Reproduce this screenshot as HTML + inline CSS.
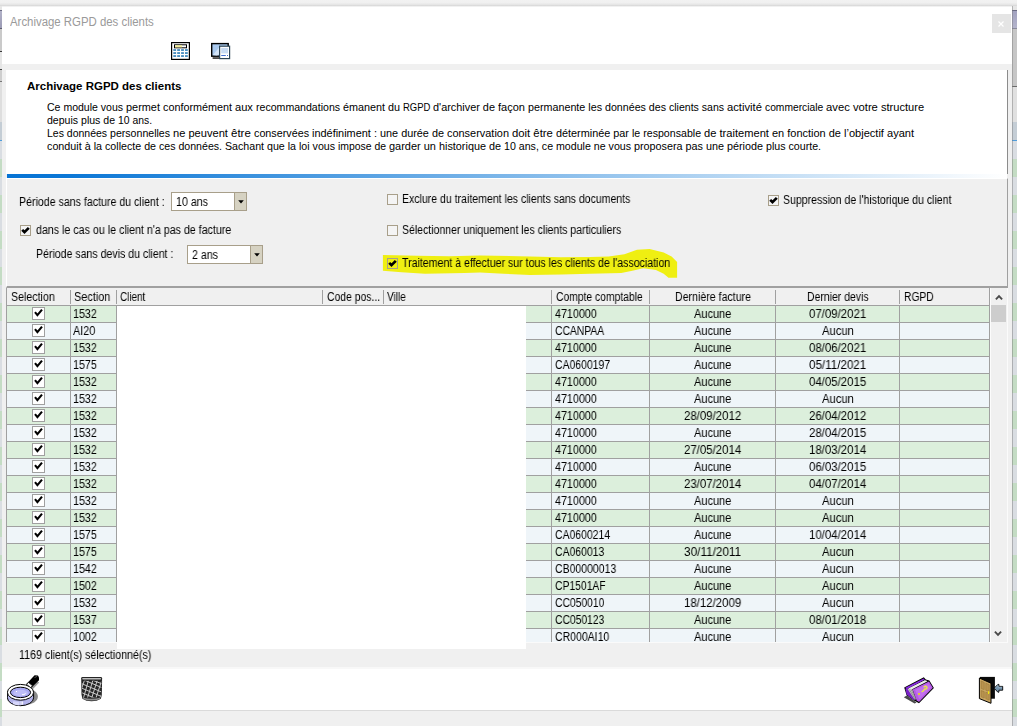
<!DOCTYPE html>
<html><head><meta charset="utf-8"><title>Archivage RGPD des clients</title>
<style>
html,body{margin:0;padding:0}
body{width:1017px;height:726px;position:relative;overflow:hidden;background:#f0f0f0;font-family:'Liberation Sans', sans-serif;}
div,span.t,svg{position:absolute;box-sizing:border-box}
span.t{white-space:pre;display:block;transform-origin:0 0}
span.g{will-change:transform}
</style></head><body>
<div style="left:0;top:0;width:1017px;height:6px;background:linear-gradient(#f2f2f2 0%,#f0f0f0 45%,#e6e6e6 75%,#d6d6d6 100%)"></div>
<div style="left:0px;top:6px;width:2px;height:720px;background:repeating-linear-gradient(#c4dcc4 0,#c4dcc4 18px,#d9dde2 18px,#d9dde2 36px);background-position:0 153px"></div>
<div style="left:0px;top:6px;width:2px;height:153px;background:linear-gradient(#e6e6e6 0,#e6e6e6 4px,#6c6c84 4px,#6c6c84 5px,#b2b2c8 5px,#9a9ab4 22px,#5e5e70 22px,#5e5e70 23px,#cacaca 23px,#cacaca 45px,#3a3a3a 45px,#3a3a3a 46px,#e6e6e6 46px,#e6e6e6 63px,#444 63px,#444 64px,#cecece 64px,#cecece 75px,#777 75px,#777 76px,#dedede 76px,#dedede 116px,#c4cdd5 116px,#c4cdd5 134px,#4f9ddb 134px,#4f9ddb 135px,#d9dde2 135px,#d9dde2 153px,rgba(0,0,0,0) 153px)"></div>
<div style="left:1012px;top:6px;width:5px;height:720px;background:repeating-linear-gradient(#c4dcc4 0,#c4dcc4 18px,#d9dde2 18px,#d9dde2 36px);background-position:0 153px"></div>
<div style="left:1012px;top:6px;width:5px;height:153px;background:linear-gradient(#e6e6e6 0,#e6e6e6 4px,#6c6c84 4px,#6c6c84 5px,#a2a2bf 5px,#b4b4cc 22px,#8a8a9c 22px,#8a8a9c 23px,#c6c6c6 23px,#c6c6c6 80px,#6a6a6a 80px,#6a6a6a 81px,#e0e0e0 81px,#e0e0e0 116px,#c4cdd5 116px,#c4cdd5 134px,#4f9ddb 134px,#4f9ddb 135px,#d9dde2 135px,#d9dde2 153px,rgba(0,0,0,0) 153px)"></div>
<div style="left:2px;top:6px;width:1010px;height:58px;background:#fff;"></div>
<div style="left:2px;top:6px;width:1010px;height:1px;background:#f1f1f1;"></div>
<div style="left:2px;top:64px;width:1010px;height:662px;background:#f0f0f0;"></div>
<div style="left:1012px;top:6px;width:1px;height:720px;background:rgba(120,120,120,0.45);"></div>
<div style="left:992px;top:14px;width:19px;height:19px;background:#e5e5e5;"></div>
<div style="left:6px;top:70px;width:1001px;height:104px;background:#fff;"></div>
<div style="left:1007px;top:70px;width:1px;height:104px;background:#8c8c8c;"></div>
<div style="left:7px;top:174px;width:1000px;height:4px;background:linear-gradient(90deg,#0673d4 0%,#0b77d6 6%,#ffffff 100%)"></div>
<div style="left:6px;top:178px;width:1002px;height:110px;background:#f0f0f0;border-left:1px solid #fff;border-top:1px solid #fff;border-right:1px solid #a0a0a0;border-bottom:2px solid #a0a0a0;"></div>
<div style="left:171px;top:192px;width:76px;height:19px;background:#fff;border:1px solid #a89f8a;"></div>
<div style="left:234px;top:193px;width:12px;height:17px;background:#d6d2c2;border-left:1px solid #a89f8a;"></div>
<div style="left:20px;top:225px;width:11px;height:11px;background:#f4f4f4;border:1px solid #a89f8a;"></div>
<div style="left:187px;top:245px;width:76px;height:19px;background:#fff;border:1px solid #a89f8a;"></div>
<div style="left:250px;top:246px;width:12px;height:17px;background:#d6d2c2;border-left:1px solid #a89f8a;"></div>
<div style="left:387px;top:194px;width:11px;height:11px;background:#f4f4f4;border:1px solid #a89f8a;"></div>
<div style="left:387px;top:225px;width:11px;height:11px;background:#f4f4f4;border:1px solid #a89f8a;"></div>
<svg style="left:370px;top:240px" width="320" height="50" viewBox="370 240 320 50">
<path d="M382.9 255 L417 255.8 L449 256.3 L480 255.4 L530 256.5 L561 257.2 L590 257 L608.7 256.5 L624.4 254.2 L637 249.8 L649.6 249.1 L663.7 252.6 L671.6 256.5 L677.1 262 L677.1 277.8 L668.5 277.8 L663.7 273.8 L655.9 269.9 L643.3 268.3 L632.3 270.7 L621.3 273 L589.8 273.8 L561.5 274.6 L530 274.9 L503.7 273.8 L480 272.6 L464.4 273 L425 273.8 L401.5 272.3 L382.9 270.7 Z" fill="#efef12"/></svg>
<div style="left:387px;top:258px;width:11px;height:11px;background:#efef12;border:1px solid #a89f8a;"></div>
<div style="left:768px;top:195px;width:11px;height:11px;background:#f4f4f4;border:1px solid #a89f8a;"></div>
<div style="left:6px;top:288px;width:1px;height:354px;background:#a0a0a0;"></div>
<div style="left:7px;top:288px;width:983px;height:17px;background:#f0f0f0;"></div>
<div style="left:7px;top:305px;width:983px;height:1px;background:#a0a0a0;"></div>
<div style="left:70px;top:290px;width:1px;height:14px;background:#a0a0a0;"></div>
<div style="left:116px;top:290px;width:1px;height:14px;background:#a0a0a0;"></div>
<div style="left:322px;top:290px;width:1px;height:14px;background:#a0a0a0;"></div>
<div style="left:383px;top:290px;width:1px;height:14px;background:#a0a0a0;"></div>
<div style="left:551px;top:290px;width:1px;height:14px;background:#a0a0a0;"></div>
<div style="left:649px;top:290px;width:1px;height:14px;background:#a0a0a0;"></div>
<div style="left:775px;top:290px;width:1px;height:14px;background:#a0a0a0;"></div>
<div style="left:899px;top:290px;width:1px;height:14px;background:#a0a0a0;"></div>
<div style="left:989px;top:288px;width:1px;height:354px;background:#a0a0a0;"></div>
<div style="left:7px;top:306px;width:982px;height:336px;overflow:hidden">
<div style="left:0;top:0px;width:982px;height:16px;background:#dcefdc"></div>
<div style="left:0;top:16px;width:982px;height:1px;background:#a0a0a0"></div>
<div style="left:25px;top:1px;width:13px;height:13px;background:#fff;border:1px solid #a0a0a0"></div>
<svg style="left:25px;top:1px" width="13" height="13" viewBox="0 0 13 13"><path d="M3 5.2 L5.4 8.2 L10 2.6" stroke="#000" stroke-width="2.1" fill="none"/></svg>
<div style="left:0;top:17px;width:982px;height:16px;background:#eff5f9"></div>
<div style="left:0;top:33px;width:982px;height:1px;background:#a0a0a0"></div>
<div style="left:25px;top:18px;width:13px;height:13px;background:#fff;border:1px solid #a0a0a0"></div>
<svg style="left:25px;top:18px" width="13" height="13" viewBox="0 0 13 13"><path d="M3 5.2 L5.4 8.2 L10 2.6" stroke="#000" stroke-width="2.1" fill="none"/></svg>
<div style="left:0;top:34px;width:982px;height:16px;background:#dcefdc"></div>
<div style="left:0;top:50px;width:982px;height:1px;background:#a0a0a0"></div>
<div style="left:25px;top:35px;width:13px;height:13px;background:#fff;border:1px solid #a0a0a0"></div>
<svg style="left:25px;top:35px" width="13" height="13" viewBox="0 0 13 13"><path d="M3 5.2 L5.4 8.2 L10 2.6" stroke="#000" stroke-width="2.1" fill="none"/></svg>
<div style="left:0;top:51px;width:982px;height:16px;background:#eff5f9"></div>
<div style="left:0;top:67px;width:982px;height:1px;background:#a0a0a0"></div>
<div style="left:25px;top:52px;width:13px;height:13px;background:#fff;border:1px solid #a0a0a0"></div>
<svg style="left:25px;top:52px" width="13" height="13" viewBox="0 0 13 13"><path d="M3 5.2 L5.4 8.2 L10 2.6" stroke="#000" stroke-width="2.1" fill="none"/></svg>
<div style="left:0;top:68px;width:982px;height:16px;background:#dcefdc"></div>
<div style="left:0;top:84px;width:982px;height:1px;background:#a0a0a0"></div>
<div style="left:25px;top:69px;width:13px;height:13px;background:#fff;border:1px solid #a0a0a0"></div>
<svg style="left:25px;top:69px" width="13" height="13" viewBox="0 0 13 13"><path d="M3 5.2 L5.4 8.2 L10 2.6" stroke="#000" stroke-width="2.1" fill="none"/></svg>
<div style="left:0;top:85px;width:982px;height:16px;background:#eff5f9"></div>
<div style="left:0;top:101px;width:982px;height:1px;background:#a0a0a0"></div>
<div style="left:25px;top:86px;width:13px;height:13px;background:#fff;border:1px solid #a0a0a0"></div>
<svg style="left:25px;top:86px" width="13" height="13" viewBox="0 0 13 13"><path d="M3 5.2 L5.4 8.2 L10 2.6" stroke="#000" stroke-width="2.1" fill="none"/></svg>
<div style="left:0;top:102px;width:982px;height:16px;background:#dcefdc"></div>
<div style="left:0;top:118px;width:982px;height:1px;background:#a0a0a0"></div>
<div style="left:25px;top:103px;width:13px;height:13px;background:#fff;border:1px solid #a0a0a0"></div>
<svg style="left:25px;top:103px" width="13" height="13" viewBox="0 0 13 13"><path d="M3 5.2 L5.4 8.2 L10 2.6" stroke="#000" stroke-width="2.1" fill="none"/></svg>
<div style="left:0;top:119px;width:982px;height:16px;background:#eff5f9"></div>
<div style="left:0;top:135px;width:982px;height:1px;background:#a0a0a0"></div>
<div style="left:25px;top:120px;width:13px;height:13px;background:#fff;border:1px solid #a0a0a0"></div>
<svg style="left:25px;top:120px" width="13" height="13" viewBox="0 0 13 13"><path d="M3 5.2 L5.4 8.2 L10 2.6" stroke="#000" stroke-width="2.1" fill="none"/></svg>
<div style="left:0;top:136px;width:982px;height:16px;background:#dcefdc"></div>
<div style="left:0;top:152px;width:982px;height:1px;background:#a0a0a0"></div>
<div style="left:25px;top:137px;width:13px;height:13px;background:#fff;border:1px solid #a0a0a0"></div>
<svg style="left:25px;top:137px" width="13" height="13" viewBox="0 0 13 13"><path d="M3 5.2 L5.4 8.2 L10 2.6" stroke="#000" stroke-width="2.1" fill="none"/></svg>
<div style="left:0;top:153px;width:982px;height:16px;background:#eff5f9"></div>
<div style="left:0;top:169px;width:982px;height:1px;background:#a0a0a0"></div>
<div style="left:25px;top:154px;width:13px;height:13px;background:#fff;border:1px solid #a0a0a0"></div>
<svg style="left:25px;top:154px" width="13" height="13" viewBox="0 0 13 13"><path d="M3 5.2 L5.4 8.2 L10 2.6" stroke="#000" stroke-width="2.1" fill="none"/></svg>
<div style="left:0;top:170px;width:982px;height:16px;background:#dcefdc"></div>
<div style="left:0;top:186px;width:982px;height:1px;background:#a0a0a0"></div>
<div style="left:25px;top:171px;width:13px;height:13px;background:#fff;border:1px solid #a0a0a0"></div>
<svg style="left:25px;top:171px" width="13" height="13" viewBox="0 0 13 13"><path d="M3 5.2 L5.4 8.2 L10 2.6" stroke="#000" stroke-width="2.1" fill="none"/></svg>
<div style="left:0;top:187px;width:982px;height:16px;background:#eff5f9"></div>
<div style="left:0;top:203px;width:982px;height:1px;background:#a0a0a0"></div>
<div style="left:25px;top:188px;width:13px;height:13px;background:#fff;border:1px solid #a0a0a0"></div>
<svg style="left:25px;top:188px" width="13" height="13" viewBox="0 0 13 13"><path d="M3 5.2 L5.4 8.2 L10 2.6" stroke="#000" stroke-width="2.1" fill="none"/></svg>
<div style="left:0;top:204px;width:982px;height:16px;background:#dcefdc"></div>
<div style="left:0;top:220px;width:982px;height:1px;background:#a0a0a0"></div>
<div style="left:25px;top:205px;width:13px;height:13px;background:#fff;border:1px solid #a0a0a0"></div>
<svg style="left:25px;top:205px" width="13" height="13" viewBox="0 0 13 13"><path d="M3 5.2 L5.4 8.2 L10 2.6" stroke="#000" stroke-width="2.1" fill="none"/></svg>
<div style="left:0;top:221px;width:982px;height:16px;background:#eff5f9"></div>
<div style="left:0;top:237px;width:982px;height:1px;background:#a0a0a0"></div>
<div style="left:25px;top:222px;width:13px;height:13px;background:#fff;border:1px solid #a0a0a0"></div>
<svg style="left:25px;top:222px" width="13" height="13" viewBox="0 0 13 13"><path d="M3 5.2 L5.4 8.2 L10 2.6" stroke="#000" stroke-width="2.1" fill="none"/></svg>
<div style="left:0;top:238px;width:982px;height:16px;background:#dcefdc"></div>
<div style="left:0;top:254px;width:982px;height:1px;background:#a0a0a0"></div>
<div style="left:25px;top:239px;width:13px;height:13px;background:#fff;border:1px solid #a0a0a0"></div>
<svg style="left:25px;top:239px" width="13" height="13" viewBox="0 0 13 13"><path d="M3 5.2 L5.4 8.2 L10 2.6" stroke="#000" stroke-width="2.1" fill="none"/></svg>
<div style="left:0;top:255px;width:982px;height:16px;background:#eff5f9"></div>
<div style="left:0;top:271px;width:982px;height:1px;background:#a0a0a0"></div>
<div style="left:25px;top:256px;width:13px;height:13px;background:#fff;border:1px solid #a0a0a0"></div>
<svg style="left:25px;top:256px" width="13" height="13" viewBox="0 0 13 13"><path d="M3 5.2 L5.4 8.2 L10 2.6" stroke="#000" stroke-width="2.1" fill="none"/></svg>
<div style="left:0;top:272px;width:982px;height:16px;background:#dcefdc"></div>
<div style="left:0;top:288px;width:982px;height:1px;background:#a0a0a0"></div>
<div style="left:25px;top:273px;width:13px;height:13px;background:#fff;border:1px solid #a0a0a0"></div>
<svg style="left:25px;top:273px" width="13" height="13" viewBox="0 0 13 13"><path d="M3 5.2 L5.4 8.2 L10 2.6" stroke="#000" stroke-width="2.1" fill="none"/></svg>
<div style="left:0;top:289px;width:982px;height:16px;background:#eff5f9"></div>
<div style="left:0;top:305px;width:982px;height:1px;background:#a0a0a0"></div>
<div style="left:25px;top:290px;width:13px;height:13px;background:#fff;border:1px solid #a0a0a0"></div>
<svg style="left:25px;top:290px" width="13" height="13" viewBox="0 0 13 13"><path d="M3 5.2 L5.4 8.2 L10 2.6" stroke="#000" stroke-width="2.1" fill="none"/></svg>
<div style="left:0;top:306px;width:982px;height:16px;background:#dcefdc"></div>
<div style="left:0;top:322px;width:982px;height:1px;background:#a0a0a0"></div>
<div style="left:25px;top:307px;width:13px;height:13px;background:#fff;border:1px solid #a0a0a0"></div>
<svg style="left:25px;top:307px" width="13" height="13" viewBox="0 0 13 13"><path d="M3 5.2 L5.4 8.2 L10 2.6" stroke="#000" stroke-width="2.1" fill="none"/></svg>
<div style="left:0;top:323px;width:982px;height:16px;background:#eff5f9"></div>
<div style="left:0;top:339px;width:982px;height:1px;background:#a0a0a0"></div>
<div style="left:25px;top:324px;width:13px;height:13px;background:#fff;border:1px solid #a0a0a0"></div>
<svg style="left:25px;top:324px" width="13" height="13" viewBox="0 0 13 13"><path d="M3 5.2 L5.4 8.2 L10 2.6" stroke="#000" stroke-width="2.1" fill="none"/></svg>
<div style="left:63px;top:0;width:1px;height:336px;background:#a0a0a0"></div>
<div style="left:109px;top:0;width:1px;height:336px;background:#a0a0a0"></div>
<div style="left:315px;top:0;width:1px;height:336px;background:#a0a0a0"></div>
<div style="left:376px;top:0;width:1px;height:336px;background:#a0a0a0"></div>
<div style="left:544px;top:0;width:1px;height:336px;background:#a0a0a0"></div>
<div style="left:642px;top:0;width:1px;height:336px;background:#a0a0a0"></div>
<div style="left:768px;top:0;width:1px;height:336px;background:#a0a0a0"></div>
<div style="left:892px;top:0;width:1px;height:336px;background:#a0a0a0"></div>
<div style="left:110px;top:0;width:409px;height:336px;background:#fff"></div>
</div>
<div style="left:6px;top:642px;width:1002px;height:1px;background:#fafafa;"></div>
<div style="left:117px;top:642px;width:409px;height:7px;background:#fff;"></div>
<div style="left:990px;top:288px;width:17px;height:354px;background:#f0f0f0;"></div>
<div style="left:1007px;top:288px;width:1px;height:354px;background:#fbfbfb;"></div>
<div style="left:990px;top:288px;width:1px;height:354px;background:#fcfcfc;"></div>
<div style="left:991px;top:305px;width:15px;height:17px;background:#cdcdcd;"></div>
<div style="left:2px;top:667px;width:1009px;height:2px;background:#f8f8f8;"></div>
<div style="left:2px;top:669px;width:1010px;height:41px;background:#fff;"></div>
<div style="left:2px;top:710px;width:1010px;height:1px;background:#dadada;"></div>
<span class="t" style="left:10.20px;top:13.54px;font-size:12px;line-height:17px;color:#9a9a9a;transform:scaleX(0.9498);">Archivage RGPD des clients</span>
<span class="t" style="left:27.00px;top:78.45px;font-size:11.4px;line-height:16px;color:#000;font-weight:bold;transform:scaleX(1.0075);">Archivage RGPD des clients</span>
<span class="t" style="left:46.80px;top:100.09px;font-size:11px;line-height:15px;color:#000;transform:scaleX(0.9571);">Ce module vous </span>
<span class="t" style="left:125.80px;top:100.09px;font-size:11px;line-height:15px;color:#000;transform:scaleX(0.9922);">permet </span>
<span class="t" style="left:162.80px;top:100.09px;font-size:11px;line-height:15px;color:#000;transform:scaleX(0.9814);">conformément </span>
<span class="t" style="left:234.80px;top:100.09px;font-size:11px;line-height:15px;color:#000;transform:scaleX(1.0100);">aux </span>
<span class="t" style="left:255.80px;top:100.09px;font-size:11px;line-height:15px;color:#000;transform:scaleX(0.9615);">recommandations </span>
<span class="t" style="left:342.80px;top:100.09px;font-size:11px;line-height:15px;color:#000;transform:scaleX(0.9811);">émanent du </span>
<span class="t" style="left:402.80px;top:100.09px;font-size:11px;line-height:15px;color:#000;transform:scaleX(0.8612);">RGPD </span>
<span class="t" style="left:432.80px;top:100.09px;font-size:11px;line-height:15px;color:#000;transform:scaleX(0.9895);">d&#x27;archiver de </span>
<span class="t" style="left:497.80px;top:100.09px;font-size:11px;line-height:15px;color:#000;transform:scaleX(1.0012);">façon </span>
<span class="t" style="left:527.80px;top:100.09px;font-size:11px;line-height:15px;color:#000;transform:scaleX(0.9762);">permanente les </span>
<span class="t" style="left:604.80px;top:100.09px;font-size:11px;line-height:15px;color:#000;transform:scaleX(0.9689);">données des </span>
<span class="t" style="left:668.80px;top:100.09px;font-size:11px;line-height:15px;color:#000;transform:scaleX(0.9583);">clients sans </span>
<span class="t" style="left:726.80px;top:100.09px;font-size:11px;line-height:15px;color:#000;transform:scaleX(1.0190);">activité </span>
<span class="t" style="left:764.80px;top:100.09px;font-size:11px;line-height:15px;color:#000;transform:scaleX(0.9327);">commerciale </span>
<span class="t" style="left:825.80px;top:100.09px;font-size:11px;line-height:15px;color:#000;transform:scaleX(1.0223);">avec votre </span>
<span class="t" style="left:880.80px;top:100.09px;font-size:11px;line-height:15px;color:#000;transform:scaleX(1.0076);">structure</span>
<span class="t" style="left:46.80px;top:113.09px;font-size:11px;line-height:15px;color:#000;transform:scaleX(0.9595);">depuis plus de </span>
<span class="t" style="left:117.80px;top:113.09px;font-size:11px;line-height:15px;color:#000;transform:scaleX(0.9437);">10 ans.</span>
<span class="t" style="left:46.80px;top:126.09px;font-size:11px;line-height:15px;color:#000;transform:scaleX(0.9538);">Les données </span>
<span class="t" style="left:109.80px;top:126.09px;font-size:11px;line-height:15px;color:#000;transform:scaleX(0.9629);">personnelles </span>
<span class="t" style="left:172.80px;top:126.09px;font-size:11px;line-height:15px;color:#000;transform:scaleX(1.0088);">ne peuvent </span>
<span class="t" style="left:230.80px;top:126.09px;font-size:11px;line-height:15px;color:#000;transform:scaleX(1.0449);">être </span>
<span class="t" style="left:253.80px;top:126.09px;font-size:11px;line-height:15px;color:#000;transform:scaleX(0.9780);">conservées </span>
<span class="t" style="left:311.80px;top:126.09px;font-size:11px;line-height:15px;color:#000;transform:scaleX(0.9930);">indéfiniment : </span>
<span class="t" style="left:379.80px;top:126.09px;font-size:11px;line-height:15px;color:#000;transform:scaleX(0.9869);">une durée de </span>
<span class="t" style="left:446.80px;top:126.09px;font-size:11px;line-height:15px;color:#000;transform:scaleX(0.9935);">conservation </span>
<span class="t" style="left:511.80px;top:126.09px;font-size:11px;line-height:15px;color:#000;transform:scaleX(1.0280);">doit être </span>
<span class="t" style="left:555.80px;top:126.09px;font-size:11px;line-height:15px;color:#000;transform:scaleX(0.9865);">déterminée par </span>
<span class="t" style="left:631.80px;top:126.09px;font-size:11px;line-height:15px;color:#000;transform:scaleX(0.9651);">le responsable </span>
<span class="t" style="left:703.80px;top:126.09px;font-size:11px;line-height:15px;color:#000;transform:scaleX(1.0110);">de traitement </span>
<span class="t" style="left:771.80px;top:126.09px;font-size:11px;line-height:15px;color:#000;transform:scaleX(0.9977);">en fonction de </span>
<span class="t" style="left:843.80px;top:126.09px;font-size:11px;line-height:15px;color:#000;transform:scaleX(1.0047);">l’objectif </span>
<span class="t" style="left:886.80px;top:126.09px;font-size:11px;line-height:15px;color:#000;transform:scaleX(1.0055);">ayant</span>
<span class="t" style="left:46.80px;top:139.09px;font-size:11px;line-height:15px;color:#000;transform:scaleX(0.9778);">conduit à la </span>
<span class="t" style="left:104.80px;top:139.09px;font-size:11px;line-height:15px;color:#000;transform:scaleX(0.9704);">collecte de </span>
<span class="t" style="left:158.80px;top:139.09px;font-size:11px;line-height:15px;color:#000;transform:scaleX(0.9636);">ces données. </span>
<span class="t" style="left:224.80px;top:139.09px;font-size:11px;line-height:15px;color:#000;transform:scaleX(0.9680);">Sachant que la </span>
<span class="t" style="left:298.80px;top:139.09px;font-size:11px;line-height:15px;color:#000;transform:scaleX(0.9665);">loi vous </span>
<span class="t" style="left:337.80px;top:139.09px;font-size:11px;line-height:15px;color:#000;transform:scaleX(0.9478);">impose de </span>
<span class="t" style="left:388.80px;top:139.09px;font-size:11px;line-height:15px;color:#000;transform:scaleX(0.9971);">garder un </span>
<span class="t" style="left:438.80px;top:139.09px;font-size:11px;line-height:15px;color:#000;transform:scaleX(0.9842);">historique de </span>
<span class="t" style="left:503.80px;top:139.09px;font-size:11px;line-height:15px;color:#000;transform:scaleX(0.9663);">10 ans, ce </span>
<span class="t" style="left:555.80px;top:139.09px;font-size:11px;line-height:15px;color:#000;transform:scaleX(0.9663);">module ne vous </span>
<span class="t" style="left:633.80px;top:139.09px;font-size:11px;line-height:15px;color:#000;transform:scaleX(0.9812);">proposera pas </span>
<span class="t" style="left:705.80px;top:139.09px;font-size:11px;line-height:15px;color:#000;transform:scaleX(0.9810);">une période </span>
<span class="t" style="left:765.80px;top:139.09px;font-size:11px;line-height:15px;color:#000;transform:scaleX(0.9682);">plus courte.</span>
<span class="t g" style="left:19.40px;top:193.54px;font-size:12px;line-height:17px;color:#000;transform:scaleX(0.8843);">Période sans facture du client :</span>
<span class="t g" style="left:175.80px;top:194.04px;font-size:12px;line-height:17px;color:#000;transform:scaleX(0.8882);">10 ans</span>
<span class="t g" style="left:35.80px;top:221.64px;font-size:12px;line-height:17px;color:#000;transform:scaleX(0.8887);">dans le cas ou le client n&#x27;a pas de facture</span>
<span class="t g" style="left:35.80px;top:246.34px;font-size:12px;line-height:17px;color:#000;transform:scaleX(0.8802);">Période sans devis du client :</span>
<span class="t g" style="left:191.80px;top:247.04px;font-size:12px;line-height:17px;color:#000;transform:scaleX(0.8857);">2 ans</span>
<span class="t g" style="left:401.60px;top:190.94px;font-size:12px;line-height:17px;color:#000;transform:scaleX(0.8781);">Exclure du traitement les clients sans documents</span>
<span class="t g" style="left:401.60px;top:222.14px;font-size:12px;line-height:17px;color:#000;transform:scaleX(0.8763);">Sélectionner uniquement les clients particuliers</span>
<span class="t g" style="left:401.90px;top:254.54px;font-size:12px;line-height:17px;color:#000;transform:scaleX(0.8829);">Traitement à effectuer sur tous les clients de l&#x27;association</span>
<span class="t g" style="left:782.80px;top:191.54px;font-size:12px;line-height:17px;color:#000;transform:scaleX(0.8783);">Suppression de l&#x27;historique du client</span>
<span class="t g" style="left:10.80px;top:289.34px;font-size:12px;line-height:17px;color:#000;transform:scaleX(0.8872);">Selection</span>
<span class="t g" style="left:74.30px;top:289.34px;font-size:12px;line-height:17px;color:#000;transform:scaleX(0.9072);">Section</span>
<span class="t g" style="left:120.40px;top:289.34px;font-size:12px;line-height:17px;color:#000;transform:scaleX(0.8231);">Client</span>
<span class="t g" style="left:326.90px;top:289.34px;font-size:12px;line-height:17px;color:#000;transform:scaleX(0.8667);">Code pos...</span>
<span class="t g" style="left:387.00px;top:289.34px;font-size:12px;line-height:17px;color:#000;transform:scaleX(0.8383);">Ville</span>
<span class="t g" style="left:555.70px;top:289.34px;font-size:12px;line-height:17px;color:#000;transform:scaleX(0.8610);">Compte comptable</span>
<span class="t g" style="left:675.10px;top:289.34px;font-size:12px;line-height:17px;color:#000;transform:scaleX(0.8846);">Dernière facture</span>
<span class="t g" style="left:807.40px;top:289.34px;font-size:12px;line-height:17px;color:#000;transform:scaleX(0.8714);">Dernier devis</span>
<span class="t g" style="left:903.50px;top:289.34px;font-size:12px;line-height:17px;color:#000;transform:scaleX(0.8570);">RGPD</span>
<span class="t g" style="left:73.00px;top:306.34px;font-size:12px;line-height:17px;color:#000;transform:scaleX(0.8919);">1532</span>
<span class="t g" style="left:554.60px;top:306.34px;font-size:12px;line-height:17px;color:#000;transform:scaleX(0.8949);">4710000</span>
<span class="t g" style="left:694.00px;top:306.34px;font-size:12px;line-height:17px;color:#000;transform:scaleX(0.9165);">Aucune</span>
<span class="t g" style="left:809.25px;top:306.34px;font-size:12px;line-height:17px;color:#000;transform:scaleX(0.9522);">07/09/2021</span>
<span class="t g" style="left:73.00px;top:323.34px;font-size:12px;line-height:17px;color:#000;transform:scaleX(0.9036);">AI20</span>
<span class="t g" style="left:554.60px;top:323.34px;font-size:12px;line-height:17px;color:#000;transform:scaleX(0.8631);">CCANPAA</span>
<span class="t g" style="left:694.00px;top:323.34px;font-size:12px;line-height:17px;color:#000;transform:scaleX(0.9165);">Aucune</span>
<span class="t g" style="left:822.40px;top:323.34px;font-size:12px;line-height:17px;color:#000;transform:scaleX(0.9355);">Aucun</span>
<span class="t g" style="left:73.00px;top:340.34px;font-size:12px;line-height:17px;color:#000;transform:scaleX(0.8919);">1532</span>
<span class="t g" style="left:554.60px;top:340.34px;font-size:12px;line-height:17px;color:#000;transform:scaleX(0.8949);">4710000</span>
<span class="t g" style="left:694.00px;top:340.34px;font-size:12px;line-height:17px;color:#000;transform:scaleX(0.9165);">Aucune</span>
<span class="t g" style="left:809.25px;top:340.34px;font-size:12px;line-height:17px;color:#000;transform:scaleX(0.9522);">08/06/2021</span>
<span class="t g" style="left:73.00px;top:357.34px;font-size:12px;line-height:17px;color:#000;transform:scaleX(0.8919);">1575</span>
<span class="t g" style="left:554.60px;top:357.34px;font-size:12px;line-height:17px;color:#000;transform:scaleX(0.8695);">CA0600197</span>
<span class="t g" style="left:694.00px;top:357.34px;font-size:12px;line-height:17px;color:#000;transform:scaleX(0.9165);">Aucune</span>
<span class="t g" style="left:809.25px;top:357.34px;font-size:12px;line-height:17px;color:#000;transform:scaleX(0.9665);">05/11/2021</span>
<span class="t g" style="left:73.00px;top:374.34px;font-size:12px;line-height:17px;color:#000;transform:scaleX(0.8919);">1532</span>
<span class="t g" style="left:554.60px;top:374.34px;font-size:12px;line-height:17px;color:#000;transform:scaleX(0.8949);">4710000</span>
<span class="t g" style="left:694.00px;top:374.34px;font-size:12px;line-height:17px;color:#000;transform:scaleX(0.9165);">Aucune</span>
<span class="t g" style="left:809.25px;top:374.34px;font-size:12px;line-height:17px;color:#000;transform:scaleX(0.9522);">04/05/2015</span>
<span class="t g" style="left:73.00px;top:391.34px;font-size:12px;line-height:17px;color:#000;transform:scaleX(0.8919);">1532</span>
<span class="t g" style="left:554.60px;top:391.34px;font-size:12px;line-height:17px;color:#000;transform:scaleX(0.8949);">4710000</span>
<span class="t g" style="left:694.00px;top:391.34px;font-size:12px;line-height:17px;color:#000;transform:scaleX(0.9165);">Aucune</span>
<span class="t g" style="left:822.40px;top:391.34px;font-size:12px;line-height:17px;color:#000;transform:scaleX(0.9355);">Aucun</span>
<span class="t g" style="left:73.00px;top:408.34px;font-size:12px;line-height:17px;color:#000;transform:scaleX(0.8919);">1532</span>
<span class="t g" style="left:554.60px;top:408.34px;font-size:12px;line-height:17px;color:#000;transform:scaleX(0.8949);">4710000</span>
<span class="t g" style="left:684.05px;top:408.34px;font-size:12px;line-height:17px;color:#000;transform:scaleX(0.9522);">28/09/2012</span>
<span class="t g" style="left:809.25px;top:408.34px;font-size:12px;line-height:17px;color:#000;transform:scaleX(0.9522);">26/04/2012</span>
<span class="t g" style="left:73.00px;top:425.34px;font-size:12px;line-height:17px;color:#000;transform:scaleX(0.8919);">1532</span>
<span class="t g" style="left:554.60px;top:425.34px;font-size:12px;line-height:17px;color:#000;transform:scaleX(0.8949);">4710000</span>
<span class="t g" style="left:694.00px;top:425.34px;font-size:12px;line-height:17px;color:#000;transform:scaleX(0.9165);">Aucune</span>
<span class="t g" style="left:809.25px;top:425.34px;font-size:12px;line-height:17px;color:#000;transform:scaleX(0.9522);">28/04/2015</span>
<span class="t g" style="left:73.00px;top:442.34px;font-size:12px;line-height:17px;color:#000;transform:scaleX(0.8919);">1532</span>
<span class="t g" style="left:554.60px;top:442.34px;font-size:12px;line-height:17px;color:#000;transform:scaleX(0.8949);">4710000</span>
<span class="t g" style="left:684.05px;top:442.34px;font-size:12px;line-height:17px;color:#000;transform:scaleX(0.9522);">27/05/2014</span>
<span class="t g" style="left:809.25px;top:442.34px;font-size:12px;line-height:17px;color:#000;transform:scaleX(0.9522);">18/03/2014</span>
<span class="t g" style="left:73.00px;top:459.34px;font-size:12px;line-height:17px;color:#000;transform:scaleX(0.8919);">1532</span>
<span class="t g" style="left:554.60px;top:459.34px;font-size:12px;line-height:17px;color:#000;transform:scaleX(0.8949);">4710000</span>
<span class="t g" style="left:694.00px;top:459.34px;font-size:12px;line-height:17px;color:#000;transform:scaleX(0.9165);">Aucune</span>
<span class="t g" style="left:809.25px;top:459.34px;font-size:12px;line-height:17px;color:#000;transform:scaleX(0.9522);">06/03/2015</span>
<span class="t g" style="left:73.00px;top:476.34px;font-size:12px;line-height:17px;color:#000;transform:scaleX(0.8919);">1532</span>
<span class="t g" style="left:554.60px;top:476.34px;font-size:12px;line-height:17px;color:#000;transform:scaleX(0.8949);">4710000</span>
<span class="t g" style="left:684.05px;top:476.34px;font-size:12px;line-height:17px;color:#000;transform:scaleX(0.9522);">23/07/2014</span>
<span class="t g" style="left:809.25px;top:476.34px;font-size:12px;line-height:17px;color:#000;transform:scaleX(0.9522);">04/07/2014</span>
<span class="t g" style="left:73.00px;top:493.34px;font-size:12px;line-height:17px;color:#000;transform:scaleX(0.8919);">1532</span>
<span class="t g" style="left:554.60px;top:493.34px;font-size:12px;line-height:17px;color:#000;transform:scaleX(0.8949);">4710000</span>
<span class="t g" style="left:694.00px;top:493.34px;font-size:12px;line-height:17px;color:#000;transform:scaleX(0.9165);">Aucune</span>
<span class="t g" style="left:822.40px;top:493.34px;font-size:12px;line-height:17px;color:#000;transform:scaleX(0.9355);">Aucun</span>
<span class="t g" style="left:73.00px;top:510.34px;font-size:12px;line-height:17px;color:#000;transform:scaleX(0.8919);">1532</span>
<span class="t g" style="left:554.60px;top:510.34px;font-size:12px;line-height:17px;color:#000;transform:scaleX(0.8949);">4710000</span>
<span class="t g" style="left:694.00px;top:510.34px;font-size:12px;line-height:17px;color:#000;transform:scaleX(0.9165);">Aucune</span>
<span class="t g" style="left:822.40px;top:510.34px;font-size:12px;line-height:17px;color:#000;transform:scaleX(0.9355);">Aucun</span>
<span class="t g" style="left:73.00px;top:527.34px;font-size:12px;line-height:17px;color:#000;transform:scaleX(0.8919);">1575</span>
<span class="t g" style="left:554.60px;top:527.34px;font-size:12px;line-height:17px;color:#000;transform:scaleX(0.8695);">CA0600214</span>
<span class="t g" style="left:694.00px;top:527.34px;font-size:12px;line-height:17px;color:#000;transform:scaleX(0.9165);">Aucune</span>
<span class="t g" style="left:809.25px;top:527.34px;font-size:12px;line-height:17px;color:#000;transform:scaleX(0.9522);">10/04/2014</span>
<span class="t g" style="left:73.00px;top:544.34px;font-size:12px;line-height:17px;color:#000;transform:scaleX(0.8919);">1575</span>
<span class="t g" style="left:554.60px;top:544.34px;font-size:12px;line-height:17px;color:#000;transform:scaleX(0.8696);">CA060013</span>
<span class="t g" style="left:684.05px;top:544.34px;font-size:12px;line-height:17px;color:#000;transform:scaleX(0.9812);">30/11/2011</span>
<span class="t g" style="left:822.40px;top:544.34px;font-size:12px;line-height:17px;color:#000;transform:scaleX(0.9355);">Aucun</span>
<span class="t g" style="left:73.00px;top:561.34px;font-size:12px;line-height:17px;color:#000;transform:scaleX(0.8919);">1542</span>
<span class="t g" style="left:554.60px;top:561.34px;font-size:12px;line-height:17px;color:#000;transform:scaleX(0.8737);">CB00000013</span>
<span class="t g" style="left:694.00px;top:561.34px;font-size:12px;line-height:17px;color:#000;transform:scaleX(0.9165);">Aucune</span>
<span class="t g" style="left:822.40px;top:561.34px;font-size:12px;line-height:17px;color:#000;transform:scaleX(0.9355);">Aucun</span>
<span class="t g" style="left:73.00px;top:578.34px;font-size:12px;line-height:17px;color:#000;transform:scaleX(0.8919);">1502</span>
<span class="t g" style="left:554.60px;top:578.34px;font-size:12px;line-height:17px;color:#000;transform:scaleX(0.8635);">CP1501AF</span>
<span class="t g" style="left:694.00px;top:578.34px;font-size:12px;line-height:17px;color:#000;transform:scaleX(0.9165);">Aucune</span>
<span class="t g" style="left:822.40px;top:578.34px;font-size:12px;line-height:17px;color:#000;transform:scaleX(0.9355);">Aucun</span>
<span class="t g" style="left:73.00px;top:595.34px;font-size:12px;line-height:17px;color:#000;transform:scaleX(0.8919);">1532</span>
<span class="t g" style="left:554.60px;top:595.34px;font-size:12px;line-height:17px;color:#000;transform:scaleX(0.8596);">CC050010</span>
<span class="t g" style="left:684.05px;top:595.34px;font-size:12px;line-height:17px;color:#000;transform:scaleX(0.9522);">18/12/2009</span>
<span class="t g" style="left:822.40px;top:595.34px;font-size:12px;line-height:17px;color:#000;transform:scaleX(0.9355);">Aucun</span>
<span class="t g" style="left:73.00px;top:612.34px;font-size:12px;line-height:17px;color:#000;transform:scaleX(0.8919);">1537</span>
<span class="t g" style="left:554.60px;top:612.34px;font-size:12px;line-height:17px;color:#000;transform:scaleX(0.8596);">CC050123</span>
<span class="t g" style="left:694.00px;top:612.34px;font-size:12px;line-height:17px;color:#000;transform:scaleX(0.9165);">Aucune</span>
<span class="t g" style="left:809.25px;top:612.34px;font-size:12px;line-height:17px;color:#000;transform:scaleX(0.9522);">08/01/2018</span>
<span class="t g" style="left:73.00px;top:629.34px;font-size:12px;line-height:17px;color:#000;transform:scaleX(0.8919);">1002</span>
<span class="t g" style="left:554.60px;top:629.34px;font-size:12px;line-height:17px;color:#000;transform:scaleX(0.8755);">CR000AI10</span>
<span class="t g" style="left:694.00px;top:629.34px;font-size:12px;line-height:17px;color:#000;transform:scaleX(0.9165);">Aucune</span>
<span class="t g" style="left:822.40px;top:629.34px;font-size:12px;line-height:17px;color:#000;transform:scaleX(0.9355);">Aucun</span>
<span class="t g" style="left:19.00px;top:646.94px;font-size:12px;line-height:17px;color:#000;transform:scaleX(0.8868);">1169 client(s) sélectionné(s)</span>
<svg style="left:998.4px;top:20.7px" width="6" height="6" viewBox="0 0 6 6"><path d="M0.5 0.5 L5.5 5.5 M5.5 0.5 L0.5 5.5" stroke="#fff" stroke-width="1.15" fill="none"/></svg>
<svg style="left:171px;top:42px" width="19" height="18" viewBox="0 0 19 18">
<rect x="0.5" y="0.5" width="18" height="17" fill="#fff" stroke="#000" stroke-width="1.4"/>
<rect x="3.5" y="2.8" width="12" height="3" fill="#fff" stroke="#000" stroke-width="1"/>
<rect x="4" y="3.3" width="7" height="2" fill="#f4ee9a"/>
<g fill="#4b8fc0">
<rect x="2.3" y="7.1" width="2.8" height="1.9"/><rect x="6.2" y="7.1" width="2.8" height="1.9"/><rect x="10.1" y="7.1" width="2.8" height="1.9"/><rect x="14" y="7.1" width="2.8" height="1.9"/>
<rect x="2.3" y="10.1" width="2.8" height="1.9"/><rect x="6.2" y="10.1" width="2.8" height="1.9"/><rect x="10.1" y="10.1" width="2.8" height="1.9"/><rect x="14" y="10.1" width="2.8" height="1.9"/>
<rect x="2.3" y="13.1" width="2.8" height="1.9"/><rect x="6.2" y="13.1" width="2.8" height="1.9"/><rect x="10.1" y="13.1" width="2.8" height="1.9"/><rect x="14" y="13.1" width="2.8" height="1.9"/>
</g></svg>
<svg style="left:211px;top:42px" width="20" height="18" viewBox="0 0 20 18">
<rect x="0.7" y="1.6" width="16.5" height="12.6" fill="#a9c9ee" stroke="#000" stroke-width="1.4"/>
<path d="M2 13 L8 5.5 L16 3.4 L16 8 L6 13.4 Z" fill="#d3e4f7"/>
<rect x="1.6" y="15.4" width="7" height="1.3" fill="#000"/>
<rect x="8.6" y="4.2" width="10" height="12.4" fill="#fff" stroke="#2d4556" stroke-width="1.2"/>
<rect x="10.2" y="6" width="6.8" height="5.4" fill="#c9dcf3"/>
<rect x="10.2" y="13" width="4.6" height="1" fill="#3f6fd0"/><rect x="16" y="13" width="1" height="1" fill="#3f6fd0"/>
</svg>
<svg style="left:237.6px;top:199.8px" width="6" height="4" viewBox="0 0 6 4"><path d="M0.2 0.3 L5.8 0.3 L3 3.5 Z" fill="#000"/></svg>
<svg style="left:20px;top:225px" width="11" height="11" viewBox="0 0 11 11"><path d="M2.2 4.9 L4.5 7.2 L8.8 2.9" stroke="#000" stroke-width="2.7" fill="none"/></svg>
<svg style="left:253.6px;top:252.8px" width="6" height="4" viewBox="0 0 6 4"><path d="M0.2 0.3 L5.8 0.3 L3 3.5 Z" fill="#000"/></svg>
<svg style="left:387px;top:258px" width="11" height="11" viewBox="0 0 11 11"><path d="M2.2 4.9 L4.5 7.2 L8.8 2.9" stroke="#000" stroke-width="2.7" fill="none"/></svg>
<svg style="left:768px;top:195px" width="11" height="11" viewBox="0 0 11 11"><path d="M2.2 4.9 L4.5 7.2 L8.8 2.9" stroke="#000" stroke-width="2.7" fill="none"/></svg>
<svg style="left:994.5px;top:293.6px" width="8" height="7" viewBox="0 0 8 7"><path d="M0.9 5.4 L4 2.2 L7.1 5.4" stroke="#4a4a4a" stroke-width="1.9" fill="none"/></svg>
<svg style="left:994.2px;top:630.2px" width="8" height="7" viewBox="0 0 8 7"><path d="M0.9 1.6 L4 4.8 L7.1 1.6" stroke="#4a4a4a" stroke-width="1.9" fill="none"/></svg>
<svg style="left:7px;top:674.7px" width="33" height="32" viewBox="0 0 33 32">
<ellipse cx="18.3" cy="21.6" rx="12.6" ry="8.2" fill="#8c8c8c"/>
<path d="M22.5 13.5 L30 6 L32.2 7.6 L25 15 Z" fill="#9a9a9a"/>
<path d="M0.4 17.3 L0.4 22.8 A13.1 7.9 0 0 0 26.6 22.8 L26.6 17.3 Z" fill="#b2b2ea" stroke="#000" stroke-width="1"/>
<path d="M6 26.2 L6 29.2 L12.5 30.7 L12.5 26.8 Z" fill="#d6d6fb"/><rect x="13.6" y="26.4" width="0.9" height="3.4" fill="#fff"/><rect x="15.2" y="26.4" width="0.9" height="3.3" fill="#fff"/>
<ellipse cx="13.5" cy="17.3" rx="13.1" ry="7.9" fill="#fff" stroke="#000" stroke-width="1"/>
<ellipse cx="13.5" cy="17.4" rx="10.1" ry="5.2" fill="#a6a6f0" stroke="#000" stroke-width="1"/>
<ellipse cx="13.6" cy="18" rx="7.4" ry="3.2" fill="#bdbdf8"/>
<path d="M15 19.6 L17.6 19.6 L18.4 18" stroke="#fff" stroke-width="0.9" fill="none"/><rect x="9" y="16" width="1" height="1" fill="#fff"/>
<path d="M19.2 9.2 L27.6 0.3 L30.9 0.5 L32 2.6 L32 5.2 L24.6 12.6 Z" fill="#000"/>
<path d="M19.4 9.3 L21.6 7.4 L25.6 10.8 L23.6 12.6 Z" fill="#f4f4f4" stroke="#000" stroke-width="0.8"/>
<path d="M27.5 2.6 L30 1.4" stroke="#777" stroke-width="0.7"/>
</svg>
<svg style="left:80.9px;top:676.9px" width="22" height="25" viewBox="0 0 22 25">
<defs><clipPath id="tb"><path d="M0.9 3.7 L20.4 3.7 L20.2 17 L19.5 20.4 L2 20.4 L1.2 17 Z"/></clipPath></defs>
<path d="M0.2 1.3 Q0.2 0.1 1.5 0.1 L19.8 0.1 Q21.1 0.1 21.1 1.3 L20.9 17.5 L19.9 21.8 Q16 24.3 10.6 24.3 Q5 24.3 1.4 21.8 L0.5 17.5 Z" fill="#262626"/>
<g clip-path="url(#tb)" stroke="#c9c9c9" stroke-width="1" fill="none">
<path d="M-2 5.5 L24 16.5 M-2 10 L24 21 M-2 14.5 L24 25.5 M3 3 L24 12 M-2 19 L14 26 M11 3 L24 8"/>
<path d="M2.2 22 L7.4 3.5 M6.2 22 L11.8 3.5 M10.4 22 L16.2 3.5 M14.6 22 L20.4 4.5 M18.6 22 L24 8.5 M-1 16 L3.4 3.5"/>
</g>
<rect x="1.2" y="1" width="18.9" height="1.5" rx="0.7" fill="#bdbdbd"/>
<path d="M2 20.8 Q10.6 22.6 19.4 20.8 L19 22 Q15.5 23.5 10.6 23.5 Q5.5 23.5 2.4 22 Z" fill="#8e8e8e"/>
</svg>
<svg style="left:898px;top:670px" width="42" height="40" viewBox="0 0 42 40">
<path d="M5.8 27.2 L8.8 25.6 L18.6 32.4 L16.6 33.4 Z" fill="#4a4a4a"/>
<path d="M6.2 17.4 L25.8 7.2 L27.8 9.4 L31.4 10.4 L35.9 17.9 L21 33.2 L16 30.4 L8.6 25.2 Z" fill="#000"/>
<path d="M7.3 17.8 L25.6 8.4 L26.6 9.8 L8.8 19.2 Z" fill="#8a2be2"/>
<path d="M7.4 18.8 L9.8 18.4 L17.2 29.8 L15.6 30 L8.6 24.6 Z" fill="#7a22c8"/>
<path d="M9.6 18.9 L26.9 10.2 L29.6 11.2 L14.2 19.2 L18 29.6 L16.4 29.2 Z" fill="#cfcfcf"/>
<path d="M11.2 18.6 L27.4 10.6 M12.8 19 L28.6 11" stroke="#fff" stroke-width="0.7"/>
<path d="M11.4 19.6 L17.2 29.4 M13 19.4 L17.8 28.4" stroke="#777" stroke-width="0.7"/>
<path d="M14.6 19.4 L31 11.4 L34.8 17.8 L21 31.9 L18.6 30.2 Z" fill="#b65ae6"/>
<path d="M17 20 L30.4 13.4 L33 17.6 L21.4 29.4 Z" fill="#c270ee"/>
<circle cx="21" cy="24" r="1.05" fill="#e6de12"/>
<path d="M23.6 21.8 L25.2 21 L26.6 19.2 L28.6 18.6 L29 17.2 L27.6 16.2 L25.6 17" stroke="#e8e04a" stroke-width="1.5" fill="none"/>
</svg>
<svg style="left:972px;top:670px" width="40" height="40" viewBox="0 0 40 40">
<rect x="8" y="6.9" width="14.9" height="21.8" fill="#0a0a0a"/>
<path d="M7.4 8 L19 13.2 L19 33.3 L7.4 28.6 Z" fill="#c9a663" stroke="#000" stroke-width="1"/>
<path d="M9.2 11 L12.2 12.4 L12.2 19.6 L9.2 18.6 Z M13.8 13.2 L17.2 14.8 L17.2 21.4 L13.8 20.2 Z M9.2 20.6 L12.2 21.6 L12.2 28 L9.2 26.8 Z M13.8 22.2 L17.2 23.4 L17.2 30 L13.8 28.6 Z" fill="#b8924e" stroke="#9a7838" stroke-width="0.6"/>
<rect x="16.1" y="21.2" width="1" height="2.8" fill="#f4f400"/>
<path d="M22.1 18.2 L25.9 14.4 L26.9 14.4 L26.9 16.4 L30.7 16.4 L30.7 20.2 L26.9 20.2 L26.9 22.2 L25.9 22.2 Z" fill="#7392ab" stroke="#000" stroke-width="0.9"/>
<path d="M23.4 18 L26 15.6 L26 17.2 L30 17.2" stroke="#9db8cc" stroke-width="0.7" fill="none"/>
</svg>
</body></html>
